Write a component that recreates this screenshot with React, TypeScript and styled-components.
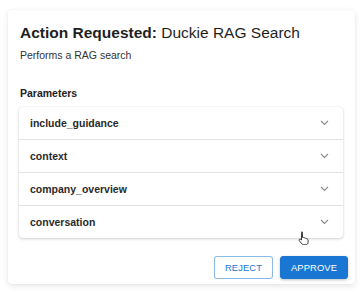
import styled, { createGlobalStyle } from "styled-components";

const GlobalStyle = createGlobalStyle`
  body {
    margin: 0;
    background: #ffffff;
    font-family: "Liberation Sans", Arial, sans-serif;
    color: rgba(0, 0, 0, 0.87);
  }
`;

const params = [
  "include_guidance",
  "context",
  "company_overview",
  "conversation",
];

const Page = styled.div`
  padding: 10px 9px 10px 8px;
`;

const Card = styled.div`
  position: relative;
  background: #fff;
  border-radius: 4px;
  box-shadow: 0 2px 6px rgba(0, 0, 0, 0.1), 0 0 2px rgba(0, 0, 0, 0.06);
  padding: 13px 12px 5px 11px;
`;

const Title = styled.h2`
  margin: 0 0 0 1px;
  font-size: 15.5px;
  font-weight: 400;
  line-height: 20px;
  color: #1f1f1f;

  strong {
    font-weight: 700;
  }
`;

const Subtitle = styled.p`
  margin: 5px 0 0 1px;
  font-size: 10.5px;
  line-height: 14px;
  color: #333;
`;

const SectionLabel = styled.p`
  margin: 24px 0 0 1px;
  font-size: 10.5px;
  font-weight: 700;
  line-height: 14px;
  color: #222;
`;

const Accordion = styled.div`
  margin-top: 7px;
  border-radius: 4px;
  box-shadow: 0 1px 3px rgba(0, 0, 0, 0.18), 0 0 1px rgba(0, 0, 0, 0.12);
  background: #fff;
`;

const Row = styled.div<{ $last?: boolean }>`
  display: flex;
  align-items: center;
  justify-content: space-between;
  height: 32px;
  padding: 0 14px 0 11px;
  border-bottom: ${(p) => (p.$last ? "none" : "1px solid #e2e2e2")};
`;

const RowLabel = styled.span`
  font-size: 10.5px;
  font-weight: 700;
  color: #2a2a2a;
`;

const Chevron = styled.svg`
  width: 9px;
  height: 6px;
  color: #8a8a8a;
`;

const Actions = styled.div`
  display: flex;
  justify-content: flex-end;
  gap: 7px;
  margin-top: 18px;
  margin-right: -5px;
`;

const Button = styled.button<{ $primary?: boolean }>`
  font-family: "Liberation Sans", Arial, sans-serif;
  font-size: 9.4px;
  letter-spacing: 0.1px;
  text-transform: uppercase;
  height: 23px;
  padding: 0 10px;
  border-radius: 3px;
  cursor: pointer;
  border: 1px solid ${(p) => (p.$primary ? "#1976d2" : "rgba(25, 118, 210, 0.5)")};
  background: ${(p) => (p.$primary ? "#1976d2" : "#fff")};
  color: ${(p) => (p.$primary ? "#fff" : "#1976d2")};
  box-shadow: ${(p) =>
    p.$primary ? "0 1px 3px rgba(0,0,0,0.25)" : "none"};
`;

const Pointer = styled.svg`
  position: absolute;
  left: 290px;
  top: 221px;
  width: 12px;
  height: 14px;
`;

const App = () => {
  return (
    <>
      <GlobalStyle />
      <Page>
        <Card>
          <Title>
            <strong>Action Requested:</strong> Duckie RAG Search
          </Title>
          <Subtitle>Performs a RAG search</Subtitle>
          <SectionLabel>Parameters</SectionLabel>
          <Accordion>
            {params.map((name, i) => (
              <Row key={name} $last={i === params.length - 1}>
                <RowLabel>{name}</RowLabel>
                <Chevron viewBox="0 0 9 6" fill="none">
                  <path
                    d="M1 1l3.5 3.5L8 1"
                    stroke="currentColor"
                    strokeWidth="1.1"
                  />
                </Chevron>
              </Row>
            ))}
          </Accordion>
          <Actions>
            <Button>Reject</Button>
            <Button $primary>Approve</Button>
          </Actions>
          <Pointer viewBox="0 0 12 14">
            <path
              d="M3.5 1.2c.6 0 1 .4 1 1v4.3l.3-.1c.5-.3 1.1 0 1.3.5.5-.3 1.1-.1 1.3.4.5-.3 1.2 0 1.3.6l.6.2c.5.2.8.7.8 1.2v2c0 1.3-1 2.4-2.4 2.4H5.6c-.7 0-1.3-.3-1.7-.8L1.4 9.8c-.4-.4-.4-1 0-1.4.4-.4 1-.4 1.4 0l.7.7V2.2c0-.6.4-1 1-1z"
              fill="#fff"
              stroke="#222"
              strokeWidth="0.9"
              strokeLinejoin="round"
            />
          </Pointer>
        </Card>
      </Page>
    </>
  );
};

export default App;
